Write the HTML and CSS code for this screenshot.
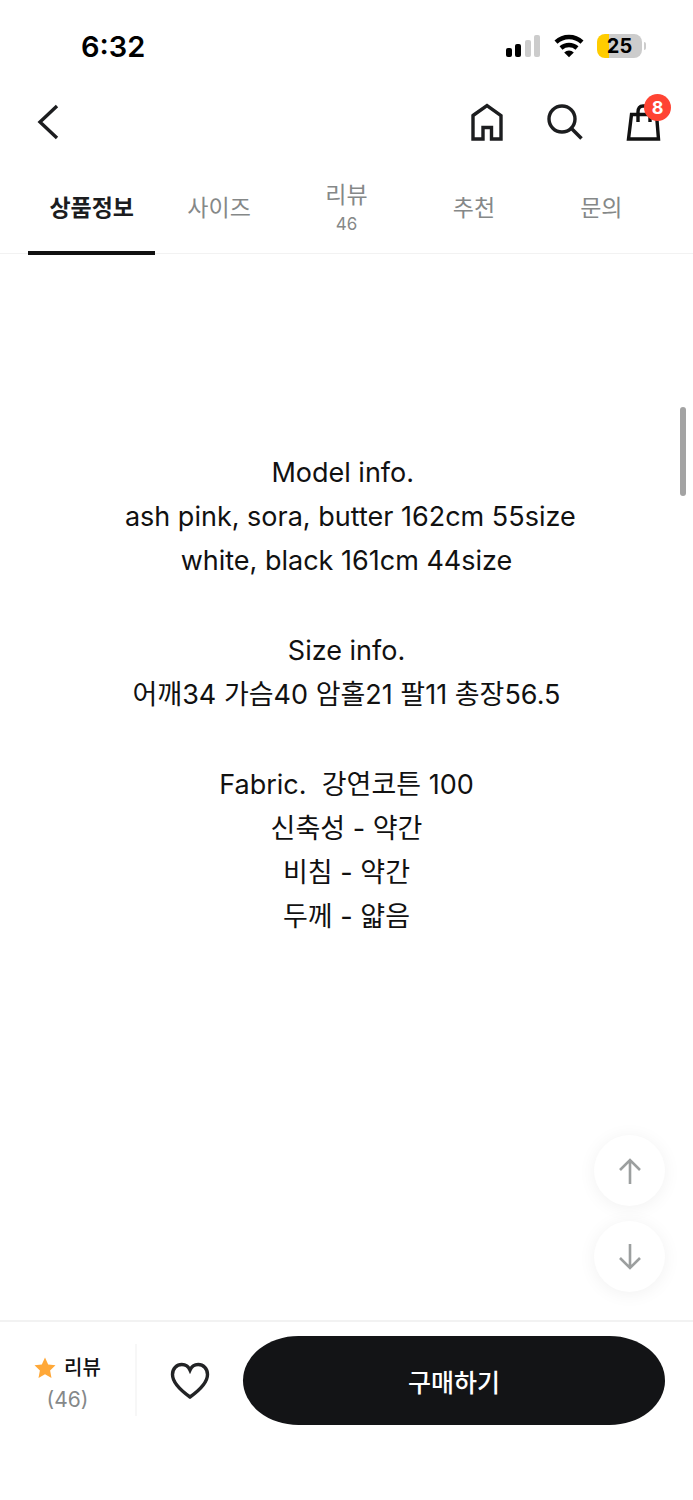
FILE: index.html
```html
<!DOCTYPE html>
<html lang="ko">
<head>
    <meta charset="UTF-8">
    <meta name="viewport" content="width=device-width, initial-scale=1.0">
    <title>상품정보</title>
    <link rel="stylesheet" href="styles.css">
</head>
<body>

    <div class="page">
        <!-- Status bar -->
        <div class="status-bar">
            <span class="time">6:32</span>
            <div class="status-icons">
                <svg class="signal" width="36" height="24" viewBox="0 0 36 24">
                    <rect x="1" y="14" width="6" height="9" rx="2" fill="#000"/>
                    <rect x="10" y="10" width="6" height="13" rx="2" fill="#000"/>
                    <rect x="20" y="6" width="6" height="17" rx="2" fill="#ccc"/>
                    <rect x="29" y="1" width="6" height="22" rx="2" fill="#ccc"/>
                </svg>
                <svg class="wifi" width="30" height="24" viewBox="0 0 30 24">
                    <path d="M2 8.2A19 19 0 0 1 28 8.2" fill="none" stroke="#000" stroke-width="4.4"/>
                    <path d="M7 14A12 12 0 0 1 23 14" fill="none" stroke="#000" stroke-width="4.4"/>
                    <path d="M15 23.2L10.2 18.4A7 7 0 0 1 19.8 18.4Z" fill="#000"/>
                </svg>
                <div class="battery"><span>25</span></div>
            </div>
        </div>

        <!-- Header -->
        <header class="header">
            <button type="button" class="icon-btn" aria-label="뒤로">
                <svg width="40" height="40" viewBox="0 0 40 40">
                    <path d="M29 4L12 20L29 36" fill="none" stroke="#1c1d1f" stroke-width="3.4"/>
                </svg>
            </button>
            <div class="header-menu">
                <a href="#" class="icon-btn" aria-label="홈">
                    <svg width="40" height="40" viewBox="0 0 40 40">
                        <path d="M6 13.5L20 3.5L34 13.5V37H24.5V25.5H16V37H6Z" fill="none" stroke="#1c1d1f" stroke-width="3.4"/>
                    </svg>
                </a>
                <a href="#" class="icon-btn" aria-label="검색">
                    <svg width="40" height="40" viewBox="0 0 40 40">
                        <circle cx="17" cy="17" r="13" fill="none" stroke="#1c1d1f" stroke-width="3.4"/>
                        <path d="M26.5 26.5L36.5 36.5" stroke="#1c1d1f" stroke-width="3.6"/>
                    </svg>
                </a>
                <a href="#" class="icon-btn" aria-label="장바구니">
                    <svg width="40" height="40" viewBox="0 0 40 40">
                        <path d="M8.500 12.500H33.500L35.500 37H5.500Z" fill="none" stroke="#111" stroke-width="3.4"/>
                        <path d="M15 20V10Q15 4 20 4H22Q27 4 27 10V20" fill="none" stroke="#111" stroke-width="3.4"/>
                    </svg>
                    <span class="badge">8</span>
                </a>
            </div>
        </header>

        <!-- Tabs -->
        <nav class="tabs">
            <a href="#" class="tab active">상품정보</a>
            <a href="#" class="tab">사이즈</a>
            <a href="#" class="tab">리뷰<small>46</small></a>
            <a href="#" class="tab">추천</a>
            <a href="#" class="tab">문의</a>
        </nav>

        <!-- Product info -->
        <main class="content">
            <div class="scrollbar"></div>
            <p>Model info.&nbsp;<br>&nbsp;ash pink, sora, butter 162cm 55size<br>white, black 161cm 44size</p>
            <p>Size info.<br>어깨34 가슴40 암홀21 팔11 총장56.5</p>
            <p>Fabric.&nbsp; 강연코튼 100<br>신축성 - 약간<br>비침 - 약간<br>두께 - 얇음</p>

            <div class="scroll-btns">
                <button type="button" class="round-btn" aria-label="맨 위로">
                    <svg width="28" height="28" viewBox="0 0 28 28">
                        <path d="M14 27V3M4 13L14 3L24 13" fill="none" stroke="#9c9f9f" stroke-width="2.6"/>
                    </svg>
                </button>
                <button type="button" class="round-btn" aria-label="맨 아래로">
                    <svg width="28" height="28" viewBox="0 0 28 28">
                        <path d="M14 1V25M4 15L14 25L24 15" fill="none" stroke="#9c9f9f" stroke-width="2.6"/>
                    </svg>
                </button>
            </div>
        </main>

        <!-- Bottom bar -->
        <footer class="bottom-bar">
            <a href="#" class="review">
                <span class="review-title">
                    <svg width="22" height="22" viewBox="0 0 22 22">
                        <path d="M11 .5L14.2 7.4L21.5 8.3L16.1 13.4L17.5 21L11 17.3L4.5 21L5.9 13.4L.5 8.3L7.8 7.4Z" fill="#ffa838"/>
                    </svg>
                    리뷰
                </span>
                <span class="review-count">(46)</span>
            </a>
            <button type="button" class="like-btn" aria-label="찜하기">
                <svg width="40" height="38" viewBox="0 0 40 38">
                    <path d="M20 35C13 30 2.500 22 2.500 12.500C2.500 6.500 6.800 2.500 11.800 2.500C15.500 2.500 18.500 4.500 20 8C21.500 4.500 24.500 2.500 28.200 2.500C33.200 2.500 37.500 6.500 37.500 12.500C37.500 22 27 30 20 35Z" fill="none" stroke="#222325" stroke-width="3.4"/>
                </svg>
            </button>
            <button type="button" class="buy-btn">구매하기</button>
        </footer>
    </div>

</body>
</html>
```
FILE: styles.css
```css
* {
    box-sizing: border-box;
}

body {
    margin: 0;
    background-color: #fff;
    font-family: Inter, "Noto Sans CJK KR", sans-serif;
    color: #111;
}

a {
    color: inherit;
    text-decoration: none;
}

button {
    padding: 0;
    border: none;
    background: none;
    font-family: inherit;
    color: inherit;
    cursor: pointer;
}

svg {
    display: block;
}

.page {
    display: flex;
    flex-direction: column;
    min-height: 100vh;
}

/* Status bar */
.status-bar {
    display: flex;
    justify-content: space-between;
    align-items: center;
    height: 92px;
    padding: 0 51px 0 81px;
}

.time {
    font-size: 29px;
    font-weight: 600;
    color: #000;
}

.status-icons {
    display: flex;
    align-items: center;
    gap: 13px;
}

.battery {
    position: relative;
    width: 45px;
    height: 24px;
    border-radius: 8px;
    background: linear-gradient(to right, #ffcc00 12px, #ccc 12px);
    font-size: 20px;
    font-weight: 700;
    line-height: 24px;
    text-align: center;
    color: #000;
}

.battery::after {
    content: "";
    position: absolute;
    top: 8px;
    right: -4px;
    width: 2px;
    height: 8px;
    border-radius: 0 2px 2px 0;
    background-color: #ccc;
}

/* Header */
.header {
    display: flex;
    justify-content: space-between;
    align-items: center;
    height: 60px;
    padding: 0 30px 0 28px;
}

.header-menu {
    display: flex;
    gap: 38px;
}

.icon-btn {
    position: relative;
    width: 40px;
    height: 40px;
}

.badge {
    position: absolute;
    top: -8px;
    right: -8px;
    width: 27px;
    height: 27px;
    border-radius: 50%;
    background-color: #ff4433;
    color: #fff;
    font-size: 18px;
    font-weight: 700;
    line-height: 27px;
    text-align: center;
}

/* Tabs */
.tabs {
    display: flex;
    height: 102px;
    padding: 0 28px;
    border-bottom: 1px solid #f2f2f2;
}

.tab {
    flex: 1;
    display: flex;
    flex-direction: column;
    justify-content: center;
    align-items: center;
    height: 103px;
    padding-top: 12px;
    border-bottom: 4px solid transparent;
    font-size: 23px;
    line-height: 32px;
    color: #858888;
}

.tab small {
    font-size: 17px;
    line-height: 26px;
}

.tab.active {
    border-color: #111;
    font-weight: 700;
    color: #1c1d1f;
}

/* Product info */
.content {
    position: relative;
    flex: 1;
    padding: 197px 20px;
    text-align: center;
    font-size: 27px;
    line-height: 44px;
}

.content p {
    margin: 0 0 46px;
}

.scrollbar {
    position: absolute;
    top: 153px;
    right: 7px;
    width: 6px;
    height: 89px;
    border-radius: 3px;
    background-color: #a3a3a3;
}

.scroll-btns {
    position: absolute;
    right: 28px;
    bottom: 28px;
    display: flex;
    flex-direction: column;
    gap: 15px;
}

.round-btn {
    display: flex;
    justify-content: center;
    align-items: center;
    width: 71px;
    height: 71px;
    border-radius: 50%;
    background-color: #fff;
    box-shadow: 0 2px 18px rgba(0, 0, 0, 0.06);
}

/* Bottom bar */
.bottom-bar {
    display: flex;
    align-items: flex-start;
    height: 180px;
    padding: 14px 28px 0 0;
    border-top: 2px solid #f2f2f2;
}

.review {
    display: flex;
    flex-direction: column;
    justify-content: center;
    align-items: center;
    width: 137px;
    height: 72px;
    margin-top: 8px;
    padding-top: 7px;
    border-right: 2px solid #f7f7f7;
    font-size: 20px;
    line-height: 32px;
}

.review-title {
    display: flex;
    align-items: center;
    gap: 8px;
    font-weight: 500;
}

.review-count {
    font-size: 21px;
    color: #858889;
}

.like-btn {
    display: flex;
    justify-content: center;
    align-items: center;
    width: 106px;
    height: 89px;
}

.buy-btn {
    flex: 1;
    height: 89px;
    border-radius: 56px / 45px;
    background-color: #131416;
    color: #fff;
    font-size: 25px;
    font-weight: 500;
}
```
